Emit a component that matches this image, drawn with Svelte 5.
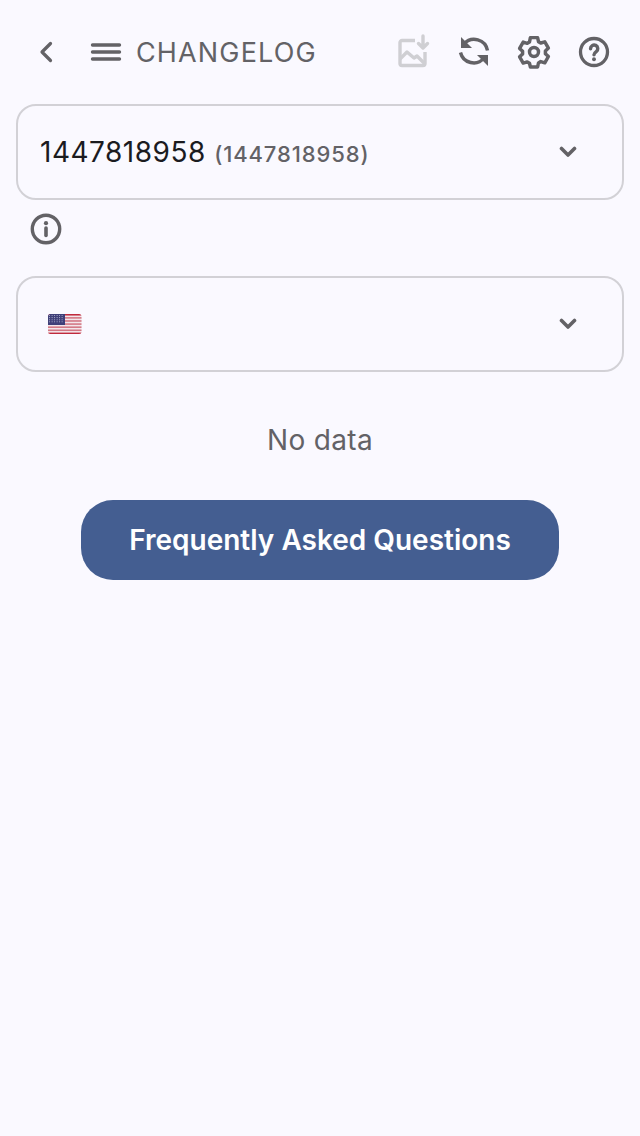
<script>
  const stripes = [0, 2, 4, 6, 8, 10, 12];
  const stars = [];
  for (let r = 0; r < 4; r++) for (let c = 0; c < 6; c++) stars.push([1.6 + c * 2.5, 1.5 + r * 2.1]);
</script>

<main class="page">
  <header class="topbar">
    <div class="left">
      <button class="icon back" aria-label="Back">
        <svg width="32" height="32" viewBox="0 0 32 32"><path d="M20.500 7.500 12 16l8.500 8.500" fill="none" stroke="#636266" stroke-width="3.200" stroke-linecap="round" stroke-linejoin="round"/></svg>
      </button>
      <button class="icon menu" aria-label="Menu">
        <svg width="32" height="32" viewBox="0 0 32 32"><path d="M2.500 9h27M2.500 16h27M2.500 23h27" fill="none" stroke="#636266" stroke-width="3.400" stroke-linecap="round"/></svg>
      </button>
      <h1>CHANGELOG</h1>
    </div>
    <div class="right">
      <svg class="tool" width="36" height="36" viewBox="0 0 36 36" fill="none" stroke="#cfcfd3" stroke-width="3.400">
        <path d="M19 6.500H6a2 2 0 0 0-2 2v21a2 2 0 0 0 2 2h21a2 2 0 0 0 2-2V18" stroke-linejoin="round"/>
        <path d="M4 25l7-7 7 6 3-2 8 8" stroke-linejoin="round"/>
        <path d="M27 2v11M22.500 9.500l4.500 4.500 4.500-4.500" stroke-linecap="round" stroke-linejoin="round"/>
      </svg>
      <svg class="tool" width="36" height="36" viewBox="0 0 36 36" fill="none" stroke="#636266" stroke-width="3.400">
        <path d="M8 10A13.500 13.500 0 0 1 31.500 16.500" />
        <path d="M28 24A13.500 13.500 0 0 1 4.500 18.500" />
        <path d="M5 3v11h11z" fill="#636266" stroke="none"/>
        <path d="M32 32V21H21z" fill="#636266" stroke="none"/>
      </svg>
      <svg class="tool" width="36" height="36" viewBox="0 0 24 24" fill="none" stroke="#636266" stroke-width="2.300" stroke-linejoin="round">
        <path d="M9.600 3h4.800l.6 2.700 1.500.9 2.700-.8 2.400 4.200-2 1.900v1.800l2 1.900-2.400 4.200-2.700-.8-1.500.9-.6 2.700H9.600L9 20.100l-1.500-.9-2.700.8-2.400-4.200 2-1.900v-1.800l-2-1.900 2.400-4.200 2.700.8 1.500-.9z" transform="translate(0 -.6)"/>
        <circle cx="12" cy="12" r="3"/>
      </svg>
      <svg class="tool" width="36" height="36" viewBox="0 0 24 24" fill="none" stroke="#636266" stroke-width="2.200">
        <circle cx="12" cy="12" r="9"/>
        <path d="M9.700 9.800a2.400 2.400 0 1 1 3.800 1.900c-1 .7-1.500 1.100-1.500 2.100" stroke-linecap="round" stroke-width="2.300"/>
        <circle cx="12" cy="16.800" r="1.300" fill="#636266" stroke="none"/>
      </svg>
    </div>
  </header>

  <section class="content">
    <div class="select first">
      <span class="value">1447818958 <small>(1447818958)</small></span>
      <svg class="chev" width="20" height="12" viewBox="0 0 20 12"><path d="M3.500 2.500 10 9l6.500-6.500" fill="none" stroke="#636266" stroke-width="3.600" stroke-linecap="round" stroke-linejoin="round"/></svg>
    </div>

    <div class="info">
      <svg width="32" height="32" viewBox="0 0 32 32" fill="none">
        <circle cx="16" cy="16" r="13.700" stroke="#636266" stroke-width="3.400"/>
        <circle cx="16" cy="10.200" r="2.100" fill="#636266"/>
        <path d="M16 15v7.500" stroke="#636266" stroke-width="3.600" stroke-linecap="round"/>
      </svg>
    </div>

    <div class="select">
      <svg class="flag" width="34" height="20" viewBox="0 0 34 20">
        <defs><clipPath id="r"><rect width="33.500" height="20" rx="2.500"/></clipPath></defs>
        <g clip-path="url(#r)">
          <rect width="34" height="20" fill="#f3e6ea"/>
          {#each stripes as s}
            <rect y={s * 1.55} width="34" height="1.550" fill={s === 0 || s === 12 ? '#c02a3d' : '#d27683'}/>
          {/each}
          <rect width="17" height="11" fill="#3f4079"/>
          {#each stars as st}
            <circle cx={st[0]} cy={st[1]} r=".55" fill="#b9bad6"/>
          {/each}
        </g>
      </svg>
      <svg class="chev" width="20" height="12" viewBox="0 0 20 12"><path d="M3.500 2.500 10 9l6.500-6.500" fill="none" stroke="#636266" stroke-width="3.600" stroke-linecap="round" stroke-linejoin="round"/></svg>
    </div>

    <p class="empty">No data</p>
    <button class="faq">Frequently Asked Questions</button>
  </section>
</main>

<style>
  :global(body) {
    margin: 0;
    background: #faf9ff;
  }
  .page {
    min-height: 1136px;
    background: #faf9ff;
    font-family: Inter, "Liberation Sans", sans-serif;
    color: #636266;
  }
  .topbar {
    height: 104px;
    display: flex;
    justify-content: space-between;
    align-items: center;
    box-sizing: border-box;
    padding: 0 28px 0 30px;
  }
  .left, .right {
    display: flex;
    align-items: center;
  }
  .right { gap: 24px; }
  .icon {
    padding: 0;
    border: 0;
    background: none;
    width: 32px;
    height: 32px;
    display: block;
  }
  .menu { margin-left: 28px; }
  h1 {
    margin: 0 0 0 14px;
    font-size: 27px;
    font-weight: 400;
    letter-spacing: 1.15px;
    color: #636266;
  }
  .content {
    padding: 0 16px;
    display: flex;
    flex-direction: column;
  }
  .select {
    height: 96px;
    box-sizing: border-box;
    border: 2px solid #d2d1d6;
    border-radius: 20px;
    display: flex;
    align-items: center;
    justify-content: space-between;
    padding: 0 44px 0 30px;
  }
  .first { padding-left: 22px; }
  .value {
    font-size: 28px;
    letter-spacing: .5px;
    color: #1b1b1f;
  }
  small {
    font-size: 22px;
    font-weight: 500;
    letter-spacing: .9px;
    color: #636266;
  }
  .info {
    height: 76px;
    box-sizing: border-box;
    padding: 13px 0 0 14px;
  }
  .info svg { display: block; }
  .flag, .chev { display: block; }
  .empty {
    margin: 51px 0 0;
    text-align: center;
    font-size: 28px;
    letter-spacing: .35px;
    line-height: 34px;
    color: #636266;
  }
  .faq {
    align-self: center;
    margin-top: 43px;
    width: 478px;
    height: 80px;
    border: 0;
    border-radius: 32px;
    background: #445e91;
    color: #fff;
    font-family: inherit;
    font-size: 28px;
    font-weight: 600;
  }
</style>
